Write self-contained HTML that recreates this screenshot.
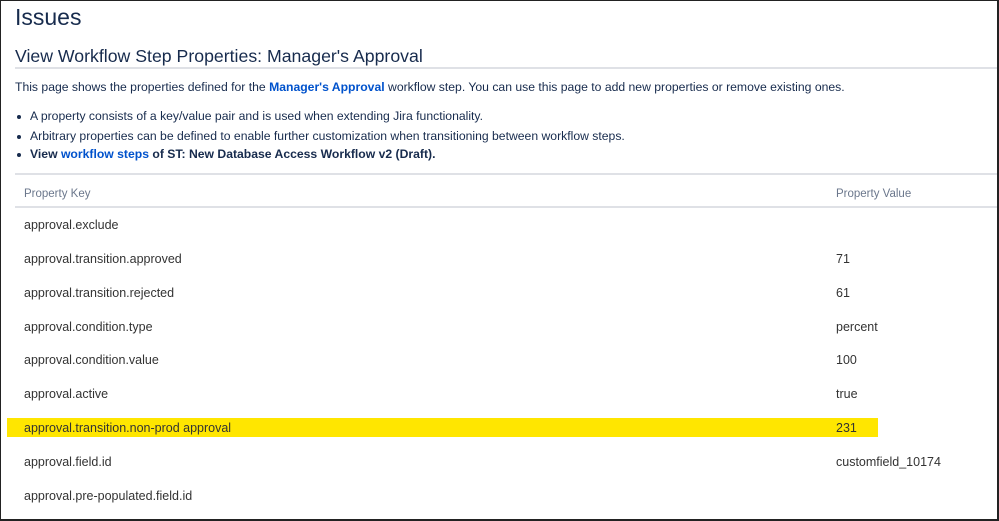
<!DOCTYPE html>
<html><head><style>
html,body{margin:0;padding:0;background:#fff;}
body{width:999px;height:521px;position:relative;overflow:hidden;font-family:"Liberation Sans",sans-serif;color:#172b4d;}
.frame{position:absolute;left:0;top:0;width:996px;height:518px;border:1px solid #222;border-right-width:2px;border-bottom-width:2px;box-sizing:content-box;z-index:5;}
.a{position:absolute;white-space:nowrap;}
.line{position:absolute;height:2px;background:#dfe1e6;}
.row{position:absolute;font-size:12.5px;color:#333;}
a{color:#0052cc;text-decoration:none;font-weight:bold;}
.dot{position:absolute;width:4px;height:4px;border-radius:50%;background:#172b4d;}
</style></head><body>
<div class="frame"></div>
<div class="a" style="left:15px;top:4px;font-size:23px;font-weight:500;">Issues</div>
<div class="a" style="left:15px;top:46px;font-size:17.7px;">View Workflow Step Properties: Manager's Approval</div>
<div class="line" style="left:15px;top:67px;width:982px;"></div>
<div class="a" style="left:15px;top:80px;font-size:12.2px;">This page shows the properties defined for the <a>Manager's Approval</a> workflow step. You can use this page to add new properties or remove existing ones.</div>
<div class="dot" style="left:17px;top:115px;"></div>
<div class="a" style="left:30px;top:109px;font-size:12.2px;">A property consists of a key/value pair and is used when extending Jira functionality.</div>
<div class="dot" style="left:17px;top:135px;"></div>
<div class="a" style="left:30px;top:129px;font-size:12.2px;">Arbitrary properties can be defined to enable further customization when transitioning between workflow steps.</div>
<div class="dot" style="left:17px;top:153px;"></div>
<div class="a" style="left:30px;top:147px;font-size:12.2px;font-weight:bold;">View <a>workflow steps</a> of ST: New Database Access Workflow v2 (Draft).</div>
<div class="line" style="left:15px;top:173px;width:982px;"></div>
<div class="a" style="left:24px;top:188px;font-size:11.5px;color:#6b778c;">Property Key</div>
<div class="a" style="left:836px;top:188px;font-size:11.5px;color:#6b778c;">Property Value</div>
<div class="line" style="left:15px;top:206px;width:982px;"></div>
<div style="position:absolute;left:7px;top:418px;width:871px;height:19px;background:#ffe600;"></div>
<div class="a row" style="left:24px;top:218px;">approval.exclude</div>
<div class="a row" style="left:24px;top:252px;">approval.transition.approved</div><div class="a row" style="left:836px;top:252px;">71</div>
<div class="a row" style="left:24px;top:286px;">approval.transition.rejected</div><div class="a row" style="left:836px;top:286px;">61</div>
<div class="a row" style="left:24px;top:320px;">approval.condition.type</div><div class="a row" style="left:836px;top:320px;">percent</div>
<div class="a row" style="left:24px;top:353px;">approval.condition.value</div><div class="a row" style="left:836px;top:353px;">100</div>
<div class="a row" style="left:24px;top:387px;">approval.active</div><div class="a row" style="left:836px;top:387px;">true</div>
<div class="a row" style="left:24px;top:421px;">approval.transition.non-prod approval</div><div class="a row" style="left:836px;top:421px;">231</div>
<div class="a row" style="left:24px;top:455px;">approval.field.id</div><div class="a row" style="left:836px;top:455px;">customfield_10174</div>
<div class="a row" style="left:24px;top:489px;">approval.pre-populated.field.id</div>
</body></html>
